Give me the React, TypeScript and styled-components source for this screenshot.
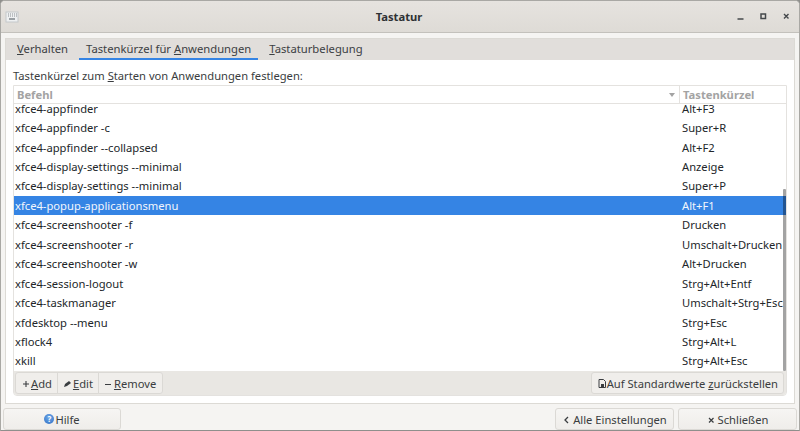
import styled, { createGlobalStyle } from "styled-components";

const GlobalStyle = createGlobalStyle`
  html, body {
    margin: 0;
    padding: 0;
    background: #8f8f8c;
  }
  body {
    font-family: "Noto Sans", sans-serif;
    font-size: 11.2px;
    color: #2e3436;
  }
`;

const Win = styled.div`
  width: 800px;
  height: 431px;
  box-sizing: border-box;
  border: 1px solid #a9a8a4;
  border-bottom: 1px solid #8f8f8c;
  border-radius: 5px 5px 0 0;
  background: #f5f4f2;
  display: flex;
  flex-direction: column;
  overflow: hidden;
`;

const TitleBar = styled.div`
  height: 31px;
  flex: none;
  display: grid;
  grid-template-columns: 1fr auto 1fr;
  align-items: center;
  padding: 0 6px 0 4px;
  background: linear-gradient(#e6e3df, #dedbd6);
  border-bottom: 1px solid #c3c1bc;
`;

const AppIcon = styled.svg`
  width: 14px;
  height: 12px;
  display: block;
`;

const Title = styled.div`
  font-weight: 700;
  font-size: 11.2px;
  color: #2e3134;
`;

const WinButtons = styled.div`
  display: flex;
  align-items: center;
  justify-content: flex-end;
  gap: 14px;
  padding-right: 2px;
`;

const WinIcon = styled.svg`
  width: 9px;
  height: 9px;
  display: block;
`;

const Body = styled.div`
  flex: 1;
  display: flex;
  flex-direction: column;
  padding: 5px 4px 0;
  min-height: 0;
`;

const Notebook = styled.div`
  height: 366px;
  flex: none;
  display: flex;
  flex-direction: column;
  border: 1px solid #dcdad5;
  box-sizing: border-box;
  background: #fff;
`;

const TabBar = styled.div`
  height: 21px;
  flex: none;
  display: flex;
  background: #e1dedb;
  padding-left: 4px;
`;

const Tab = styled.div<{ $active?: boolean }>`
  box-sizing: border-box;
  padding: 0 7px;
  margin-right: 4px;
  height: 21px;
  line-height: 19px;
  font-size: 11.25px;
  color: #3c4043;
  border-bottom: 2px solid ${(p) => (p.$active ? "#3584e4" : "transparent")};
  white-space: nowrap;

  u {
    text-underline-offset: 1px;
  }
`;

const Page = styled.div`
  flex: 1;
  display: flex;
  flex-direction: column;
  min-height: 0;
  padding: 7px 7px 7px;
`;

const Hint = styled.div`
  height: 18px;
  line-height: 17px;
  color: #3a3d40;
  flex: none;
`;

const TableBox = styled.div`
  flex: 1;
  min-height: 0;
  display: flex;
  flex-direction: column;
  border: 1px solid #e4e2df;
  border-radius: 0 0 4px 4px;
  overflow: hidden;
`;

const HeaderRow = styled.div`
  height: 17px;
  flex: none;
  display: grid;
  grid-template-columns: 1fr 107px;
  border-bottom: 1px solid #e4e2df;
  font-weight: 700;
  color: #a3a3a3;
`;

const HeaderCell = styled.div<{ $split?: boolean }>`
  display: flex;
  align-items: center;
  justify-content: space-between;
  padding: 0 4px 0 3px;
  border-left: ${(p) => (p.$split ? "1px solid #e4e2df" : "none")};
`;

const SortArrow = styled.span`
  width: 0;
  height: 0;
  border-left: 3.5px solid transparent;
  border-right: 3.5px solid transparent;
  border-top: 4px solid #a3a3a3;
`;

const ListArea = styled.div`
  height: 267px;
  flex: none;
  position: relative;
  overflow: hidden;
`;

const Rows = styled.div`
  margin-top: -5.5px;
`;

const Row = styled.div<{ $selected?: boolean }>`
  height: 19.44px;
  display: grid;
  grid-template-columns: 1fr 107px;
  align-items: center;
  color: ${(p) => (p.$selected ? "#f2f6fc" : "#222629")};
  background: ${(p) => (p.$selected ? "#3584e4" : "transparent")};
  white-space: nowrap;
`;

const CommandCell = styled.div`
  padding-left: 1px;
`;

const KeyCell = styled.div`
  padding-left: 3px;
`;

const ScrollThumb = styled.div`
  position: absolute;
  right: 0;
  top: 85px;
  bottom: 0;
  width: 3px;
  background: rgba(0, 0, 0, 0.36);
  border-radius: 1px;
`;

const Toolbar = styled.div`
  flex: 1;
  display: flex;
  align-items: center;
  justify-content: space-between;
  padding: 0 2px 0 1px;
  background: #e9e7e3;
`;

const ButtonGroup = styled.div`
  display: flex;
`;

const ToolButton = styled.div`
  height: 22px;
  box-sizing: border-box;
  display: flex;
  align-items: center;
  gap: 1px;
  padding: 0 5px;
  color: #3a3d40;
  background: #f0eeeb;
  border: 1px solid #dbd9d5;
  white-space: nowrap;
  margin-left: -1px;

  &:first-child {
    border-radius: 3px 0 0 3px;
    margin-left: 0;
  }

  &:last-child {
    border-radius: 0 3px 3px 0;
    padding-right: 6px;
  }

  &:only-child {
    border-radius: 3px;
    padding-right: 5px;
  }

  u {
    text-underline-offset: 1px;
  }
`;

const Footer = styled.div`
  flex: 1;
  display: flex;
  align-items: flex-start;
  justify-content: space-between;
  margin: 0 -2px;
  padding-top: 4px;
`;

const FooterRight = styled.div`
  display: flex;
  gap: 4px;
`;

const FooterButton = styled.div<{ $width: number; $gap?: number }>`
  width: ${(p) => p.$width}px;
  height: 22px;
  box-sizing: border-box;
  display: flex;
  align-items: center;
  justify-content: center;
  gap: ${(p) => p.$gap ?? 1}px;
  color: #3a3d40;
  background: linear-gradient(#f6f5f3, #efedea);
  border: 1px solid #dbd9d5;
  border-radius: 3px;
  white-space: nowrap;
`;

const SmallIcon = styled.svg`
  width: 9px;
  height: 11px;
  flex: none;
`;

const HelpBadge = styled.span`
  width: 10px;
  height: 10px;
  border-radius: 50%;
  background: radial-gradient(circle at 50% 35%, #6fa8e8, #2f6fc4);
  color: #fff;
  font-size: 8px;
  font-weight: 700;
  line-height: 10px;
  text-align: center;
`;

const rows: [string, string][] = [
  ["xfce4-appfinder", "Alt+F3"],
  ["xfce4-appfinder -c", "Super+R"],
  ["xfce4-appfinder --collapsed", "Alt+F2"],
  ["xfce4-display-settings --minimal", "Anzeige"],
  ["xfce4-display-settings --minimal", "Super+P"],
  ["xfce4-popup-applicationsmenu", "Alt+F1"],
  ["xfce4-screenshooter -f", "Drucken"],
  ["xfce4-screenshooter -r", "Umschalt+Drucken"],
  ["xfce4-screenshooter -w", "Alt+Drucken"],
  ["xfce4-session-logout", "Strg+Alt+Entf"],
  ["xfce4-taskmanager", "Umschalt+Strg+Esc"],
  ["xfdesktop --menu", "Strg+Esc"],
  ["xflock4", "Strg+Alt+L"],
  ["xkill", "Strg+Alt+Esc"],
];

export default function App() {
  return (
    <>
      <GlobalStyle />
      <Win>
        <TitleBar>
          <AppIcon viewBox="0 0 14 12">
            <rect x="1" y="1" width="12" height="10" fill="#eef0f1" stroke="#c4c8ca" />
            <path d="M3 3h1M5 3h1M7 3h1M9 3h1M11 3h1M3 5h1M5 5h1M7 5h1M9 5h1M11 5h1" stroke="#8a9094" />
            <path d="M4 8h6" stroke="#9aa0a4" strokeWidth="2" />
          </AppIcon>
          <Title>Tastatur</Title>
          <WinButtons>
            <WinIcon viewBox="0 0 9 9">
              <path d="M1.5 7h6" stroke="#44484b" strokeWidth="1.4" />
            </WinIcon>
            <WinIcon viewBox="0 0 9 9">
              <rect x="2" y="2" width="4.5" height="4.5" fill="none" stroke="#44484b" strokeWidth="1.5" />
            </WinIcon>
            <WinIcon viewBox="0 0 9 9">
              <path d="M2 2l4.5 4.5M6.5 2L2 6.5" stroke="#44484b" strokeWidth="1.4" />
            </WinIcon>
          </WinButtons>
        </TitleBar>
        <Body>
          <Notebook>
            <TabBar>
              <Tab>
                <u>V</u>erhalten
              </Tab>
              <Tab $active>
                Tastenkürzel für <u>A</u>nwendungen
              </Tab>
              <Tab>
                <u>T</u>astaturbelegung
              </Tab>
            </TabBar>
            <Page>
              <Hint>
                Tastenkürzel zum <u>S</u>tarten von Anwendungen festlegen:
              </Hint>
              <TableBox>
                <HeaderRow>
                  <HeaderCell>
                    Befehl
                    <SortArrow />
                  </HeaderCell>
                  <HeaderCell $split>Tastenkürzel</HeaderCell>
                </HeaderRow>
                <ListArea>
                  <Rows>
                    {rows.map(([cmd, key], i) => (
                      <Row key={cmd + key} $selected={i === 5}>
                        <CommandCell>{cmd}</CommandCell>
                        <KeyCell>{key}</KeyCell>
                      </Row>
                    ))}
                  </Rows>
                  <ScrollThumb />
                </ListArea>
                <Toolbar>
                  <ButtonGroup>
                    <ToolButton>
                      <SmallIcon viewBox="0 0 9 11">
                        <path d="M2 6h6M5 3v6" stroke="#3a3d40" strokeWidth="1.1" />
                      </SmallIcon>
                      <span>
                        <u>A</u>dd
                      </span>
                    </ToolButton>
                    <ToolButton>
                      <SmallIcon viewBox="0 0 9 11">
                        <path d="M1 9l1-3 4-3 2 2-4 3z" fill="#3a3d40" />
                      </SmallIcon>
                      <span>
                        <u>E</u>dit
                      </span>
                    </ToolButton>
                    <ToolButton>
                      <SmallIcon viewBox="0 0 9 11">
                        <path d="M1 6.5h6" stroke="#3a3d40" strokeWidth="1.2" />
                      </SmallIcon>
                      <span>
                        <u>R</u>emove
                      </span>
                    </ToolButton>
                  </ButtonGroup>
                  <ButtonGroup>
                    <ToolButton>
                      <SmallIcon viewBox="0 0 9 11">
                        <path d="M2 1.5h4.5l2 2v6H2z" fill="none" stroke="#3a3d40" />
                        <path d="M4 6h3v3H4z" fill="#3a3d40" />
                      </SmallIcon>
                      <span>
                        Auf Standardwerte <u>z</u>urückstellen
                      </span>
                    </ToolButton>
                  </ButtonGroup>
                </Toolbar>
              </TableBox>
            </Page>
          </Notebook>
          <Footer>
            <FooterButton $width={118}>
              <HelpBadge>?</HelpBadge>
              Hilfe
            </FooterButton>
            <FooterRight>
              <FooterButton $width={119} $gap={2}>
                <SmallIcon viewBox="0 0 9 11">
                  <path d="M6 3L3 6l3 3" fill="none" stroke="#3a3d40" strokeWidth="1.3" />
                </SmallIcon>
                Alle Einstellungen
              </FooterButton>
              <FooterButton $width={119} $gap={2}>
                <SmallIcon viewBox="0 0 9 11">
                  <path d="M2 4l4.5 4.5M6.5 4L2 8.5" stroke="#3a3d40" strokeWidth="1.2" />
                </SmallIcon>
                Schließen
              </FooterButton>
            </FooterRight>
          </Footer>
        </Body>
      </Win>
    </>
  );
}
